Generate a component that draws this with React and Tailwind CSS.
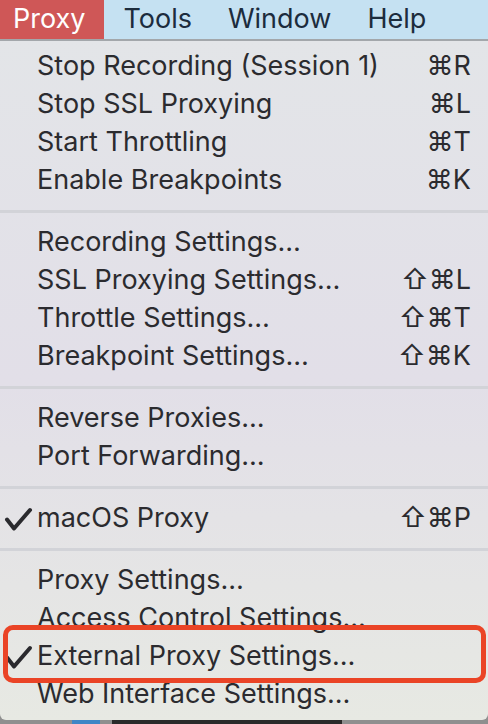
import React from "react";

const sections = [
  [
    ["Stop Recording (Session 1)", "⌘R"],
    ["Stop SSL Proxying", "⌘L"],
    ["Start Throttling", "⌘T"],
    ["Enable Breakpoints", "⌘K"],
  ],
  [
    ["Recording Settings…", ""],
    ["SSL Proxying Settings…", "⇧⌘L"],
    ["Throttle Settings…", "⇧⌘T"],
    ["Breakpoint Settings…", "⇧⌘K"],
  ],
  [
    ["Reverse Proxies…", ""],
    ["Port Forwarding…", ""],
  ],
  [["macOS Proxy", "⇧⌘P", true]],
  [
    ["Proxy Settings…", ""],
    ["Access Control Settings…", ""],
    ["External Proxy Settings…", "", true],
    ["Web Interface Settings…", ""],
  ],
];

function Check() {
  return (
    <svg width="30" height="26" viewBox="0 0 30 26" className="absolute left-[4px] top-[7px]">
      <path d="M3 13.5 L10 22.5 L26 4" fill="none" stroke="#2a2a2e" strokeWidth="4" strokeLinecap="round" strokeLinejoin="round" />
    </svg>
  );
}

function Row({ label, shortcut, checked }) {
  return (
    <div className="h-[38px] flex items-center relative pl-[37px] pr-[17px]">
      {checked && <Check />}
      <span className="flex-1 whitespace-nowrap">{label}</span>
      {shortcut && <span className="whitespace-nowrap">{shortcut}</span>}
    </div>
  );
}

export default function App() {
  return (
    <div
      className="w-[488px] h-[724px] overflow-hidden relative flex flex-col bg-[#8f8f8f]"
      style={{ fontFamily: "Inter, 'Liberation Sans', sans-serif" }}
    >
      <div className="h-[41px] shrink-0 flex bg-[#c5e1f2] border-b-2 border-[#a3a7ab] text-[27px] text-[#1c2c3d]">
        <div className="bg-[#cf5757] text-white pl-[13px] pr-[19px] flex items-center">Proxy</div>
        <div className="pl-[19px] pr-[18px] flex items-center">Tools</div>
        <div className="px-[18px] flex items-center">Window</div>
        <div className="px-[18px] flex items-center">Help</div>
      </div>
      <div className="h-[679px] shrink-0 rounded-b-[6px] pt-[6px] text-[27px] text-[#2b2b2f] bg-gradient-to-b from-[#e3e5e8] via-[#e2dfe8] to-[#e7e9e3]">
        {sections.map((sec, i) => (
          <div key={i}>
            {i > 0 && <div className="mt-[11px] mb-[10px] h-[3px] bg-[#d2d3d8]" />}
            {sec.map(([l, s, c]) => (
              <Row key={l} label={l} shortcut={s} checked={c} />
            ))}
          </div>
        ))}
      </div>
      <div className="flex-1 flex items-start">
        <div className="ml-[72px] w-[28px] h-full bg-[#3f86c6]" />
        <div className="ml-[12px] w-[230px] h-full bg-[#2a2a2a]" />
      </div>
      <div className="absolute left-[3px] top-[625px] w-[483px] h-[58px] border-[5px] border-[#ea4426] rounded-[10px]" />
    </div>
  );
}
